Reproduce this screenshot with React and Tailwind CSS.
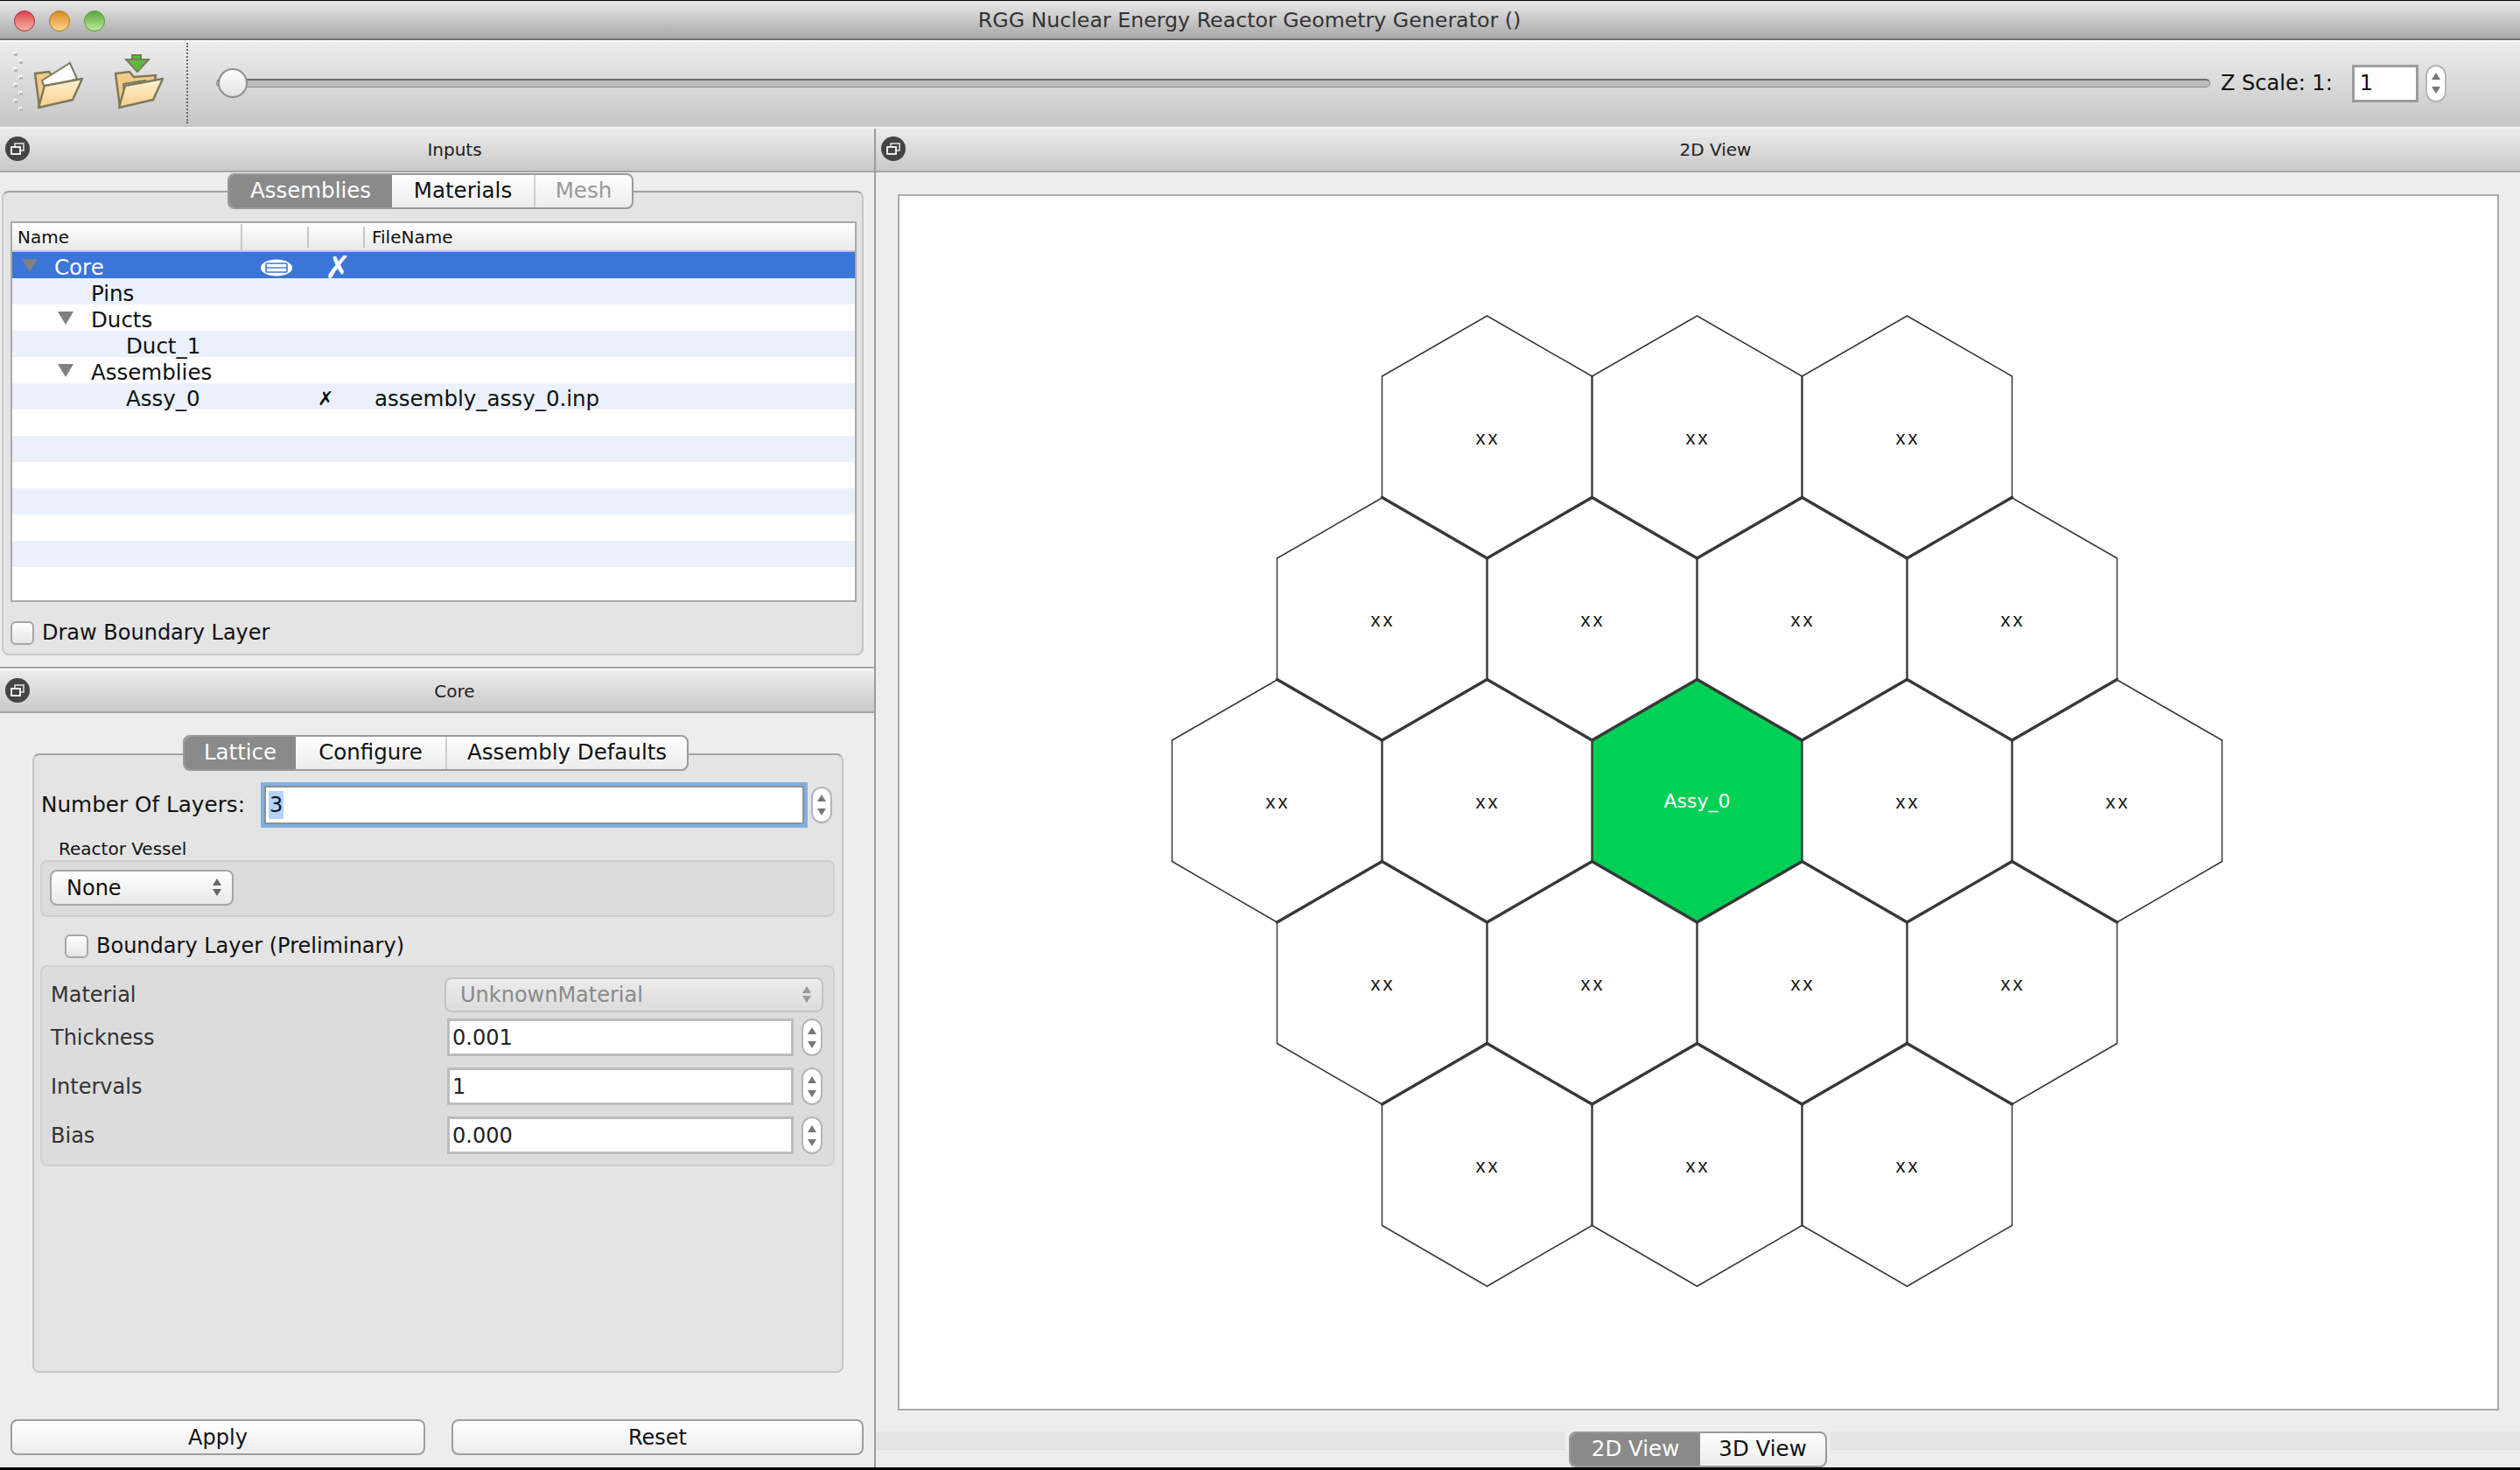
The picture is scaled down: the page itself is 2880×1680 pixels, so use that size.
const CX = 1939.5;
const CY = 499.5;
const COUNTS = [3, 4, 5, 4, 3];

function buildHexes() {
  const out = [];
  COUNTS.forEach((n, r) => {
    for (let i = 0; i < n; i++) {
      out.push({ x: CX + (i - (n - 1) / 2) * 240, y: CY + r * 208, center: r === 2 && i === 2 });
    }
  });
  return out;
}

function hexEdges(h) {
  const p = [
    [h.x, h.y - 138.5],
    [h.x + 120, h.y - 69.5],
    [h.x + 120, h.y + 69],
    [h.x, h.y + 138.5],
    [h.x - 120, h.y + 69],
    [h.x - 120, h.y - 69.5],
  ];
  return p.map((a, i) => [a, p[(i + 1) % 6]]);
}

function HexGrid() {
  const hexes = buildHexes();
  // edges drawn by two cells come out heavier, as in the original view
  const seen = {};
  hexes.forEach((h) =>
    hexEdges(h).forEach(([a, b]) => {
      const k = [a, b].map((q) => `${Math.round(q[0])},${Math.round(q[1])}`).sort().join("|");
      seen[k] = seen[k] || { a, b, n: 0 };
      seen[k].n += 1;
    })
  );
  const center = hexes.find((h) => h.center);
  return (
    <svg viewBox="1028 224 1826 1386" className="block w-full h-full">
      <polygon points={hexEdges(center).map(([a]) => a.join(",")).join(" ")} fill="#00d056" />
      {Object.values(seen).map((e, i) => {
        const vertical = e.a[0] === e.b[0];
        const w = e.n === 1 ? 1.5 : vertical ? 2.4 : 3.4;
        return <line key={i} x1={e.a[0]} y1={e.a[1]} x2={e.b[0]} y2={e.b[1]} stroke="#383838" strokeWidth={w} strokeLinecap="round" />;
      })}
      {hexes.map((h, i) =>
        h.center ? (
          <text key={i} x={h.x} y={h.y + 7} textAnchor="middle" fontSize="22" fill="#fff" fontFamily="DejaVu Sans, sans-serif">Assy_0</text>
        ) : (
          <text key={i} x={h.x + 1} y={h.y + 8} textAnchor="middle" fontSize="22" letterSpacing="3" fill="#111" fontFamily="Liberation Sans, sans-serif">xx</text>
        )
      )}
    </svg>
  );
}

function FloatIcon({ className }) {
  return (
    <svg width="28" height="28" viewBox="0 0 28 28" className={className}>
      <circle cx="14" cy="14" r="14" fill="#444" />
      <rect x="11" y="8" width="10" height="8" fill="none" stroke="#ddd" strokeWidth="1.6" />
      <rect x="7" y="12" width="10" height="8" fill="#444" stroke="#fff" strokeWidth="1.8" />
    </svg>
  );
}

function DockHeader({ title, className }) {
  return (
    <div className={`relative flex items-center justify-center pl-[40px] bg-gradient-to-b from-[#ececec] to-[#c9c9c9] border-b-2 border-[#a6a6a6] text-[20px] text-[#222] shrink-0 ${className}`}>
      <FloatIcon className="absolute left-[6px] top-[9px]" />
      {title}
    </div>
  );
}

function Tri({ down }) {
  return (
    <svg width="10" height="8" viewBox="0 0 10 8" className="block">
      <polygon points={down ? "0,0 10,0 5,8" : "0,8 10,8 5,0"} fill="currentColor" />
    </svg>
  );
}

function Spin({ className }) {
  return (
    <div className={`flex flex-col items-center justify-center gap-[8px] rounded-[12px] border-2 border-[#b5b5b5] bg-white text-[#777] ${className}`}>
      <Tri />
      <Tri down />
    </div>
  );
}

function Segmented({ items, className }) {
  return (
    <div className={`flex h-[41px] rounded-[8px] border-2 border-[#9a9a9a] bg-gradient-to-b from-white to-[#ececec] overflow-hidden text-[24.5px] ${className}`}>
      {items.map((t) => (
        <div
          key={t.label}
          className={`flex items-center justify-center ${t.w} ${
            t.active ? "bg-[#8a8a8a] text-white font-medium" : t.off ? "text-[#999]" : "text-[#111]"
          } ${t.sep ? "border-r-2 border-[#cfcfcf]" : ""}`}
        >
          {t.label}
        </div>
      ))}
    </div>
  );
}

function Checkbox({ className }) {
  return <div className={`w-[27px] h-[27px] rounded-[6px] border-2 border-[#a5a5a5] bg-gradient-to-b from-white to-[#e6e6e6] shrink-0 ${className || ""}`} />;
}

function Row({ name, depth, arrow, idx, selected, mark, file }) {
  const bg = selected ? "bg-[#3b75d8] text-white" : idx % 2 ? "bg-[#ebf1fc]" : "bg-white";
  const pad = ["pl-[48px]", "pl-[90px]", "pl-[130px]"][depth];
  return (
    <div className={`grid grid-cols-[263px_64px_80px_1fr] h-[30px] items-center text-[24.5px] ${bg}`}>
      <div className={`relative whitespace-nowrap ${pad}`}>
        {arrow && (
          <svg width="18" height="15" viewBox="0 0 18 15" className={`absolute top-[8px] ${depth === 0 ? "left-[11px]" : "left-[52px]"}`}>
            <polygon points="0,0 18,0 9,15" fill="#808080" />
          </svg>
        )}
        {name}
      </div>
      <div>
        {selected && (
          <svg width="38" height="20" viewBox="0 0 38 20" className="ml-[20px]">
            <ellipse cx="19" cy="10" rx="18" ry="9.5" fill="#fff" />
            <rect x="7" y="5" width="24" height="10" rx="1" fill="none" stroke="#3b75d8" strokeWidth="1.6" />
            <line x1="7" y1="10" x2="31" y2="10" stroke="#3b75d8" strokeWidth="1.4" />
          </svg>
        )}
      </div>
      <div className={selected ? "pl-[30px] text-[36px] font-bold leading-none" : "pl-[22px] text-[22px] leading-none"}>{mark}</div>
      <div className="pl-[7px] whitespace-nowrap">{file}</div>
    </div>
  );
}

function FieldRow({ label, value }) {
  return (
    <div className="flex items-center h-[43px] mb-[13px] last:mb-0 text-[24px]">
      <div className="w-[453px] text-[#333]">{label}</div>
      <div className="w-[396px] h-[43px] border-[3px] border-[#bcbcbc] bg-white flex items-center pl-[3px] text-[#222]">{value}</div>
      <Spin className="w-[24px] h-[43px] ml-[9px]" />
    </div>
  );
}

function FolderIcon({ open2 }) {
  return (
    <svg width="64" height="66" viewBox="0 0 64 66" className="block">
      <defs>
        <linearGradient id={open2 ? "fa" : "fb"} x1="0" y1="0" x2="0" y2="1">
          <stop offset="0" stopColor="#fff3d6" />
          <stop offset="1" stopColor="#f9cf87" />
        </linearGradient>
      </defs>
      <polygon points="4,22 20,20 25,26 50,24 46,50 9,60" fill="#f3c988" stroke="#7d7a5c" strokeWidth="2.5" />
      {open2 ? (
        <polygon points="13,34 38,30 40,40 14,46" fill="#fff" stroke="#7d7a5c" strokeWidth="2" />
      ) : (
        <polygon points="12,30 44,10 52,28 16,42" fill="#fff" stroke="#7d7a5c" strokeWidth="2" />
      )}
      <polygon points="8,61 15,36 58,28 47,52" fill={`url(#${open2 ? "fa" : "fb"})`} stroke="#7d7a5c" strokeWidth="2.5" strokeLinejoin="round" />
      {open2 && <polygon points="23,6 33,6 33,1 23,1 23,6 16,6 29,20 42,6 33,6" fill="#5cbc3a" stroke="#7d7a5c" strokeWidth="2" />}
    </svg>
  );
}

function Handle() {
  const dots = [];
  for (let i = 0; i < 8; i++) {
    dots.push(<rect key={i} x={i % 2 ? 7 : 1} y={i * 9} width="4" height="4" fill="#f7f7f7" />);
    dots.push(<rect key={"s" + i} x={i % 2 ? 8 : 2} y={i * 9 + 2} width="4" height="3" fill="#b9b9b9" />);
  }
  return (
    <svg width="12" height="72" viewBox="0 0 12 72" className="block ml-[14px] shrink-0">
      {dots}
    </svg>
  );
}

const TREE = [
  { name: "Core", depth: 0, arrow: true, selected: true, mark: "✗" },
  { name: "Pins", depth: 1 },
  { name: "Ducts", depth: 1, arrow: true },
  { name: "Duct_1", depth: 2 },
  { name: "Assemblies", depth: 1, arrow: true },
  { name: "Assy_0", depth: 2, mark: "✗", file: "assembly_assy_0.inp" },
  {},
  {},
  {},
  {},
  {},
  {},
  {},
];

export default function App() {
  return (
    <div className="h-screen w-screen overflow-hidden flex flex-col bg-[#ededed] font-['DejaVu_Sans',sans-serif] text-[#111]">
      {/* Title bar */}
      <div className="relative h-[46px] shrink-0 flex items-center justify-center pr-[24px] pt-[2px] bg-gradient-to-b from-[#e9e9e9] to-[#a8a8a8] border-t border-black border-b-2 border-b-[#6f6f6f] text-[23.7px] text-[#333]">
        <div className="absolute left-[16px] top-[11px] flex gap-[16px]">
          <div className="w-[24px] h-[24px] rounded-full border border-[#a33] bg-gradient-to-b from-[#d8404a] to-[#f8b0a8]" />
          <div className="w-[24px] h-[24px] rounded-full border border-[#b07a20] bg-gradient-to-b from-[#d98a1c] to-[#fbd58a]" />
          <div className="w-[24px] h-[24px] rounded-full border border-[#5a9a3a] bg-gradient-to-b from-[#55a83a] to-[#bfe8a0]" />
        </div>
        RGG Nuclear Energy Reactor Geometry Generator ()
      </div>

      {/* Toolbar */}
      <div className="h-[101px] shrink-0 flex items-center pb-[3px] bg-gradient-to-b from-[#ededed] to-[#c6c6c6] border-t-2 border-white border-b-2 border-b-[#f2f2f2]">
        <Handle />
        <div className="ml-[10px]"><FolderIcon /></div>
        <div className="ml-[28px]"><FolderIcon open2 /></div>
        <div className="ml-[21px] h-[92px] border-l-2 border-dotted border-[#666]" />
        <div className="relative ml-[32px] w-[2279px] h-[10px] rounded-full bg-[#bdbdbd] border border-[#8d8d8d] border-t-2 border-t-[#6f6f6f]">
          <div className="absolute left-[1px] top-[-14px] w-[34px] h-[34px] rounded-full border-2 border-[#8f8f8f] bg-gradient-to-b from-white to-[#e2e2e2]" />
        </div>
        <div className="ml-[12px] text-[24px] whitespace-nowrap">Z Scale: 1:</div>
        <div className="ml-[22px] w-[76px] h-[43px] border-[3px] border-[#9c9c9c] bg-white flex items-center pl-[6px] text-[24px]">1</div>
        <Spin className="ml-[8px] w-[24px] h-[43px]" />
      </div>

      <div className="flex-1 flex min-h-0">
        {/* Left column */}
        <div className="w-[1001px] shrink-0 flex flex-col border-r-2 border-[#9c9c9c]">
          <DockHeader title="Inputs" className="h-[50px]" />
          <div className="h-[567px] shrink-0 pl-[2px] pr-[12px] pt-[1px] border-b-2 border-[#a6a6a6]">
            <Segmented
              className="relative z-10 w-[464px] ml-[258px]"
              items={[
                { label: "Assemblies", w: "w-[186px]", active: true },
                { label: "Materials", w: "w-[164px]", sep: true },
                { label: "Mesh", w: "flex-1", off: true },
              ]}
            />
            <div className="mt-[-21px] h-[531px] rounded-[8px] border-2 border-[#c6c6c6] border-t-[#a2a2a2] bg-[#e4e4e4] pt-[33px] pl-[8px] pr-[6px]">
              <div className="h-[435px] border-2 border-[#a9a9a9] bg-white overflow-hidden">
                <div className="grid grid-cols-[263px_76px_64px_1fr] h-[33px] items-center text-[20px] bg-gradient-to-b from-white to-[#e9e9e9] border-b-2 border-[#c6c6c6]">
                  <div className="pl-[6px] border-r-2 border-[#c9c9c9]">Name</div>
                  <div className="h-[24px] border-r-2 border-[#c9c9c9]" />
                  <div className="h-[24px] border-r-2 border-[#c9c9c9]" />
                  <div className="pl-[8px]">FileName</div>
                </div>
                {TREE.map((r, i) => (
                  <Row key={i} idx={i} {...r} />
                ))}
              </div>
              <div className="flex items-center mt-[22px] text-[24px] leading-[27px]">
                <Checkbox />
                <span className="ml-[9px] whitespace-nowrap">Draw Boundary Layer</span>
              </div>
            </div>
          </div>

          <DockHeader title="Core" className="border-t-2 border-t-white h-[51px]" />

          <div className="flex-1 flex flex-col min-h-0">
            <Segmented
              className="relative z-10 w-[578px] ml-[209px] mt-[25px]"
              items={[
                { label: "Lattice", w: "w-[127px]", active: true },
                { label: "Configure", w: "w-[173px]", sep: true },
                { label: "Assembly Defaults", w: "flex-1" },
              ]}
            />
            <div className="mt-[-20px] ml-[37px] w-[927px] h-[708px] rounded-[8px] border-2 border-[#c6c6c6] border-t-[#a2a2a2] bg-[#e4e4e4] pt-[35px] pl-[7px]">
              <div className="flex items-center h-[44px]">
                <div className="w-[256px] pl-[1px] text-[24.7px] whitespace-nowrap">Number Of Layers:</div>
                <div className="w-[617px] h-[44px] border-2 border-[#8f8f8f] bg-white outline-[4px] outline-solid outline-[#7fb0e0] flex items-center pl-[3px] text-[24px]">
                  <span className="bg-[#b4d3f7] leading-[32px] px-[1px]">3</span>
                </div>
                <Spin className="ml-[8px] w-[24px] h-[42px]" />
              </div>
              <div className="mt-[16px] ml-[21px] text-[20px] leading-[24px]">Reactor Vessel</div>
              <div className="mt-[1px] w-[908px] h-[65px] rounded-[8px] border-2 border-[#cfcfcf] bg-[#dcdcdc] pt-[9px] pl-[9px]">
                <div className="relative w-[210px] h-[41px] rounded-[8px] border-2 border-[#a5a5a5] bg-gradient-to-b from-white to-[#e9e9e9] flex items-center pl-[17px] text-[24px]">
                  None
                  <div className="absolute right-[12px] top-[8px] flex flex-col gap-[4px] text-[#666]">
                    <Tri />
                    <Tri down />
                  </div>
                </div>
              </div>
              <div className="flex items-center mt-[20px] ml-[28px] text-[24px] leading-[27px]">
                <Checkbox />
                <span className="ml-[9px] whitespace-nowrap">Boundary Layer (Preliminary)</span>
              </div>
              <div className="mt-[8px] w-[908px] h-[230px] rounded-[8px] border-2 border-[#cfcfcf] bg-[#dcdcdc] pt-[12px]">
                <div className="flex items-center h-[40px] mb-[7px] text-[24px]">
                  <div className="w-[460px] pl-[10px] text-[#333]">Material</div>
                  <div className="relative w-[433px] h-[40px] rounded-[8px] border-2 border-[#c2c2c2] bg-gradient-to-b from-[#ececec] to-[#dcdcdc] flex items-center pl-[16px] text-[#8a8a8a]">
                    UnknownMaterial
                    <div className="absolute right-[12px] top-[8px] flex flex-col gap-[3px] text-[#999]">
                      <Tri />
                      <Tri down />
                    </div>
                  </div>
                </div>
                <div className="ml-[10px]">
                  <FieldRow label="Thickness" value="0.001" />
                  <FieldRow label="Intervals" value="1" />
                  <FieldRow label="Bias" value="0.000" />
                </div>
              </div>
            </div>
            <div className="flex mt-[53px] ml-[12px] gap-[30px] text-[24px]">
              <div className="w-[474px] h-[41px] rounded-[8px] border-2 border-[#9e9e9e] bg-gradient-to-b from-white to-[#ececec] flex items-center justify-center">Apply</div>
              <div className="w-[471px] h-[41px] rounded-[8px] border-2 border-[#9e9e9e] bg-gradient-to-b from-white to-[#ececec] flex items-center justify-center">Reset</div>
            </div>
          </div>
        </div>

        {/* Right column */}
        <div className="flex-1 min-w-0 flex flex-col">
          <DockHeader title="2D View" className="h-[50px]" />
          <div className="flex-1 min-h-0 mt-[25px] ml-[25px] mr-[24px] border-2 border-[#aaaaaa] bg-white">
            <HexGrid />
          </div>
          <div className="h-[41px] mt-[24px] flex items-start shrink-0">
            <div className="flex-1 h-[21px] bg-[#e4e4e4] border-b border-[#dcdcdc]" />
            <Segmented
              className="w-[295px] mx-[4px]"
              items={[
                { label: "2D View", w: "w-[148px]", active: true },
                { label: "3D View", w: "flex-1" },
              ]}
            />
            <div className="flex-1 h-[21px] bg-[#e4e4e4] border-b border-[#dcdcdc]" />
          </div>
        </div>
      </div>
      <div className="h-[3px] bg-black shrink-0" />
    </div>
  );
}
